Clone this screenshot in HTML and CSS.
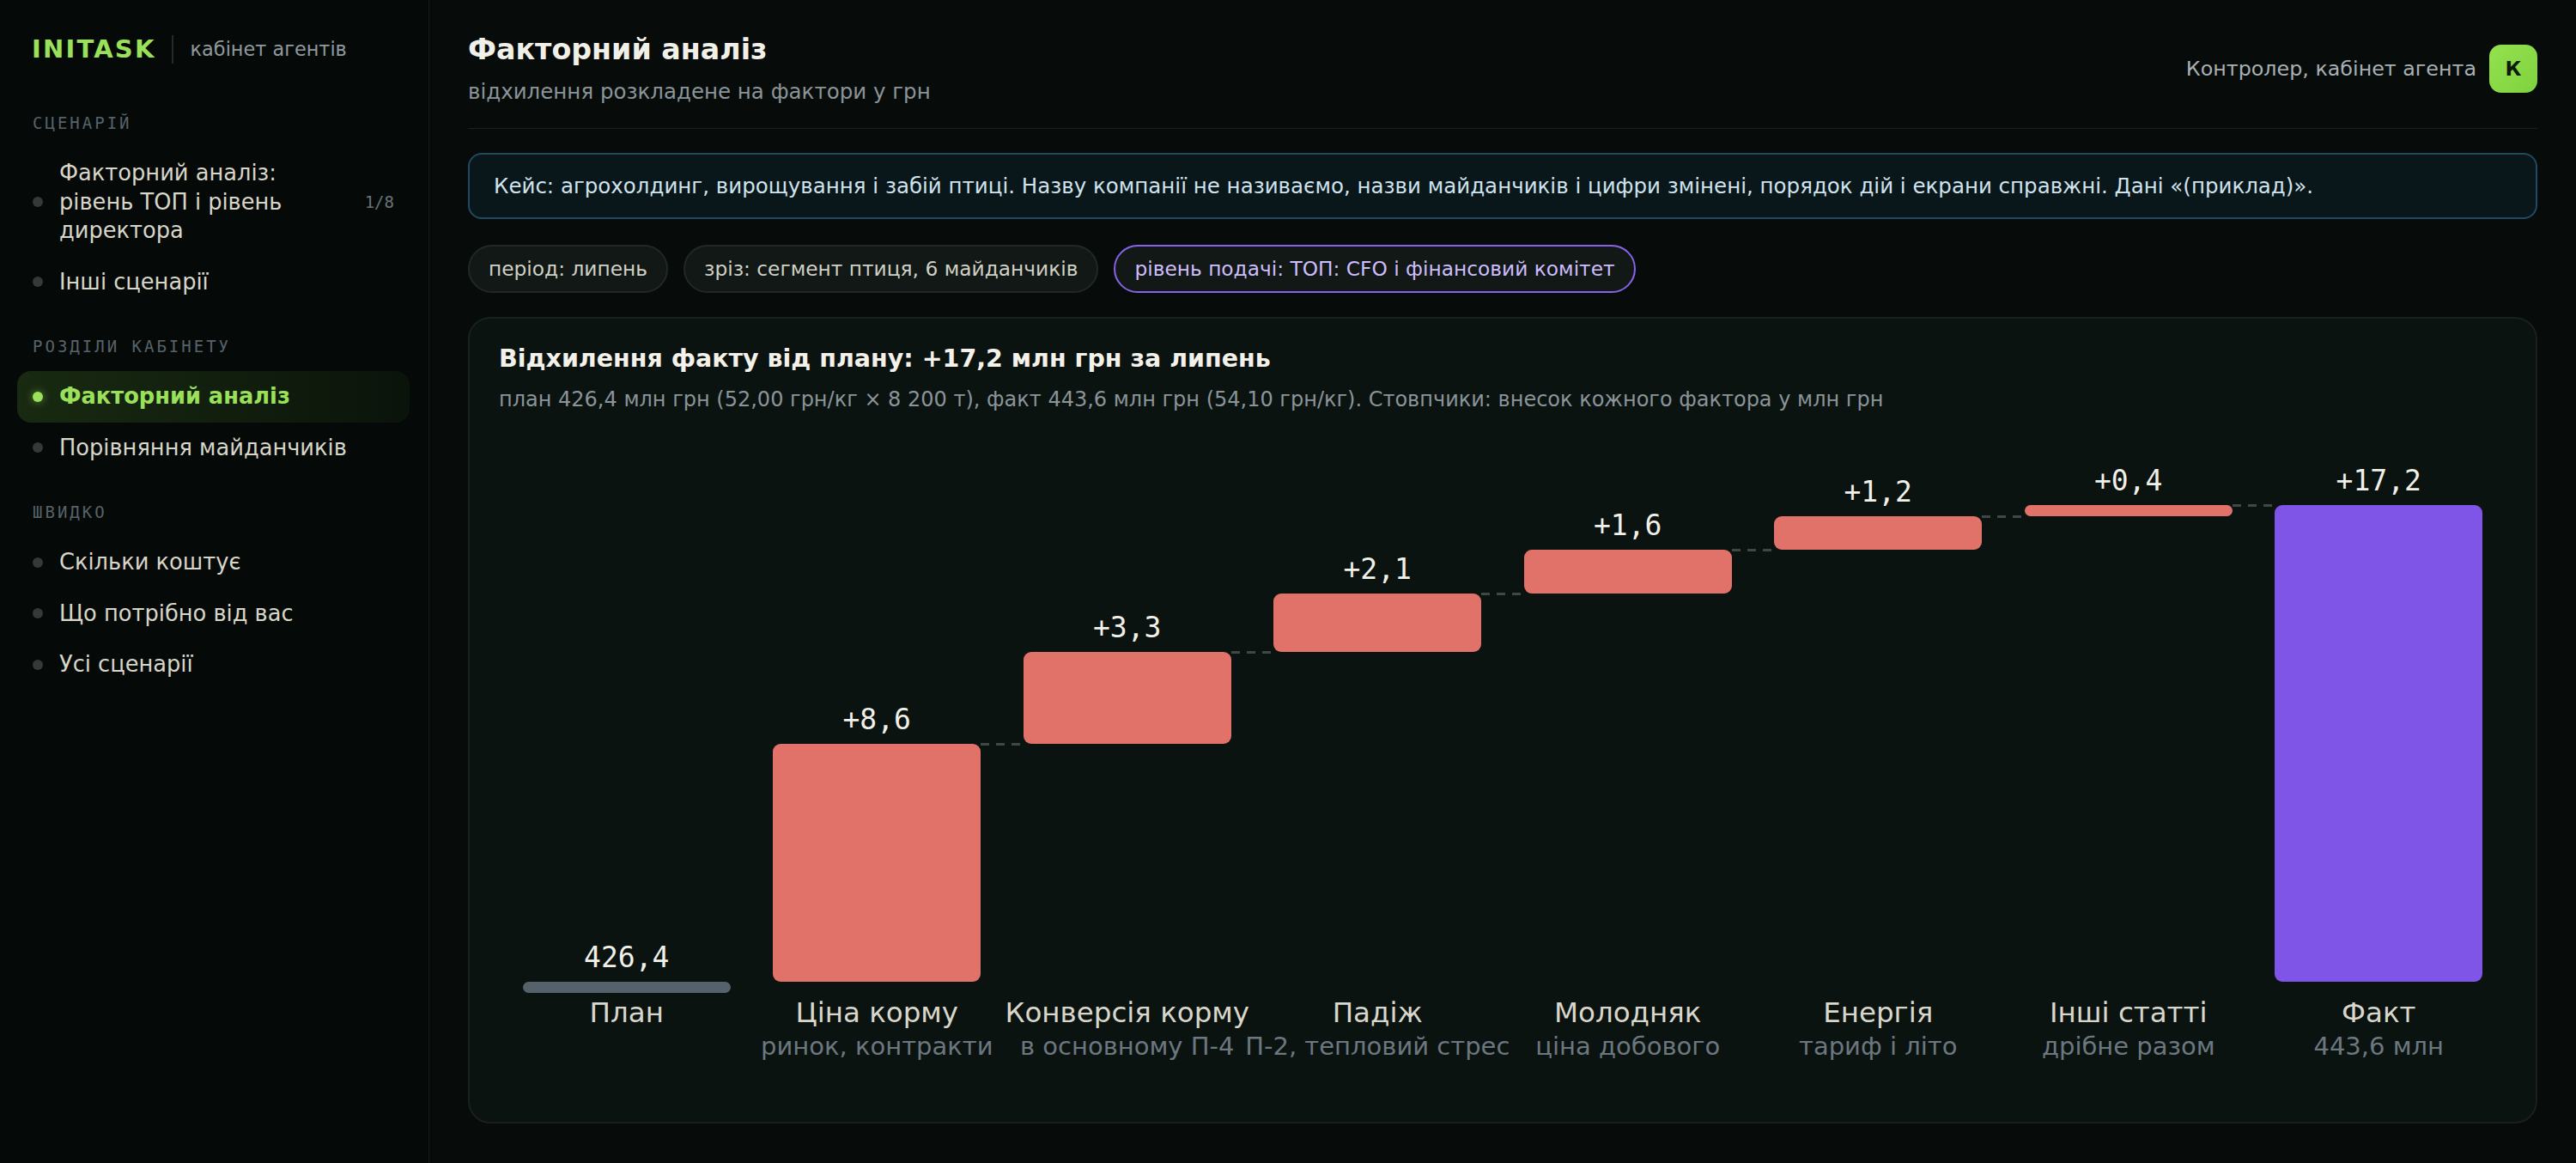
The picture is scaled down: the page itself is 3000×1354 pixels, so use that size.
FILE: index.html
```html
<!DOCTYPE html>
<html lang="uk">
<head>
    <meta charset="UTF-8">
    <meta name="viewport" content="width=device-width, initial-scale=1.0">
    <title>INITASK · Факторний аналіз</title>
    <link rel="stylesheet" href="styles.css">
</head>
<body>
    <aside class="side">
        <div class="brand">
            <span class="logo">INITASK</span>
            <span class="brand-sep"></span>
            <span class="brand-sub">кабінет агентів</span>
        </div>

        <section class="nav-group">
            <div class="nav-head">Сценарій</div>
            <a class="nav-item" href="#">
                <span class="dot"></span>
                <span class="nav-text">Факторний аналіз: рівень ТОП і рівень директора</span>
                <span class="nav-count">1/8</span>
            </a>
            <a class="nav-item" href="#">
                <span class="dot"></span>
                <span class="nav-text">Інші сценарії</span>
            </a>
        </section>

        <section class="nav-group">
            <div class="nav-head">Розділи кабінету</div>
            <a class="nav-item active" href="#">
                <span class="dot"></span>
                <span class="nav-text">Факторний аналіз</span>
            </a>
            <a class="nav-item" href="#">
                <span class="dot"></span>
                <span class="nav-text">Порівняння майданчиків</span>
            </a>
        </section>

        <section class="nav-group">
            <div class="nav-head">Швидко</div>
            <a class="nav-item" href="#">
                <span class="dot"></span>
                <span class="nav-text">Скільки коштує</span>
            </a>
            <a class="nav-item" href="#">
                <span class="dot"></span>
                <span class="nav-text">Що потрібно від вас</span>
            </a>
            <a class="nav-item" href="#">
                <span class="dot"></span>
                <span class="nav-text">Усі сценарії</span>
            </a>
        </section>
    </aside>

    <main class="main">
        <header class="top">
            <div>
                <h1 class="page-title">Факторний аналіз</h1>
                <div class="page-sub">відхилення розкладене на фактори у грн</div>
            </div>
            <div class="user">
                <span>Контролер, кабінет агента</span>
                <span class="avatar">К</span>
            </div>
        </header>

        <div class="case">Кейс: агрохолдинг, вирощування і забій птиці. Назву компанії не називаємо, назви майданчиків і цифри змінені, порядок дій і екрани справжні. Дані «(приклад)».</div>

        <div class="chips">
            <span class="chip">період: липень</span>
            <span class="chip">зріз: сегмент птиця, 6 майданчиків</span>
            <span class="chip level">рівень подачі: ТОП: CFO і фінансовий комітет</span>
        </div>

        <section class="card">
            <h2 class="card-title">Відхилення факту від плану: +17,2 млн грн за липень</h2>
            <div class="card-sub">план 426,4 млн грн (52,00 грн/кг × 8 200 т), факт 443,6 млн грн (54,10 грн/кг). Стовпчики: внесок кожного фактора у млн грн</div>
            <div class="chart" id="chart"></div>
        </section>
    </main>

    <script>
        // Factor contributions, mln UAH
        const factors = [
            { name: 'План', note: '', label: '426,4', kind: 'plan' },
            { name: 'Ціна корму', note: 'ринок, контракти', delta: 8.6 },
            { name: 'Конверсія корму', note: 'в основному П-4', delta: 3.3 },
            { name: 'Падіж', note: 'П-2, тепловий стрес', delta: 2.1 },
            { name: 'Молодняк', note: 'ціна добового', delta: 1.6 },
            { name: 'Енергія', note: 'тариф і літо', delta: 1.2 },
            { name: 'Інші статті', note: 'дрібне разом', delta: 0.4 },
            { name: 'Факт', note: '443,6 млн', delta: 17.2, kind: 'fact' }
        ];

        const PX_PER_MLN = 555 / 17.2;
        const PLAN_HEIGHT = 13;
        const chart = document.getElementById('chart');

        function formatDelta(value) {
            return '+' + value.toFixed(1).replace('.', ',');
        }

        // Build waterfall columns
        let running = 0;
        factors.forEach(f => {
            let height, lift, barClass, label;

            if (f.kind === 'plan') {
                height = PLAN_HEIGHT;
                lift = 0;
                barClass = 'plan';
                label = f.label;
            } else if (f.kind === 'fact') {
                height = f.delta * PX_PER_MLN;
                lift = PLAN_HEIGHT;
                barClass = 'fact';
                label = formatDelta(f.delta);
            } else {
                height = f.delta * PX_PER_MLN;
                lift = PLAN_HEIGHT + running * PX_PER_MLN;
                running += f.delta;
                barClass = 'up step';
                label = formatDelta(f.delta);
            }

            const col = document.createElement('div');
            col.className = 'col';
            col.innerHTML = `
                <div class="plot">
                    <div class="val">${label}</div>
                    <div class="bar ${barClass}" style="height:${height.toFixed(1)}px"></div>
                    <div style="height:${lift.toFixed(1)}px"></div>
                </div>
                <div class="name">${f.name}</div>
                <div class="note">${f.note}</div>
            `;
            chart.appendChild(col);
        });
    </script>
</body>
</html>
```

FILE: styles.css
```css
* {
    box-sizing: border-box;
}

body {
    margin: 0;
    display: flex;
    min-height: 100vh;
    background-color: #070c0a;
    color: #d8d6cb;
    font-family: "DejaVu Sans", Verdana, sans-serif;
}

/* sidebar */
.side {
    width: 500px;
    flex-shrink: 0;
    padding: 40px 22px 40px 20px;
    background-color: #050a08;
    border-right: 1px solid #161c19;
}

.brand {
    display: flex;
    align-items: center;
    height: 34px;
    padding-left: 17px;
    margin-bottom: 57px;
}

.logo {
    font-size: 29px;
    font-weight: bold;
    letter-spacing: 2.2px;
    color: #9be05b;
}

.brand-sep {
    width: 2px;
    height: 33px;
    background-color: #252b28;
    margin: 0 20px 0 18px;
}

.brand-sub {
    font-size: 22.4px;
    color: #8f999d;
}

.nav-group + .nav-group {
    margin-top: 33px;
}

.nav-head {
    padding-left: 18px;
    margin-bottom: 17px;
    font-family: "DejaVu Sans Mono", monospace;
    font-size: 19px;
    line-height: 24px;
    letter-spacing: 3px;
    text-transform: uppercase;
    color: #58626a;
}

.nav-item {
    display: flex;
    align-items: center;
    gap: 19px;
    padding: 13px 18px;
    border-radius: 16px;
    font-size: 25.7px;
    line-height: 33.5px;
    color: #d8d5c9;
    text-decoration: none;
}

.dot {
    flex-shrink: 0;
    width: 12px;
    height: 12px;
    border-radius: 50%;
    background-color: #343a37;
}

.nav-count {
    margin-left: auto;
    font-family: "DejaVu Sans Mono", monospace;
    font-size: 19px;
    color: #69727a;
}

.nav-item.active {
    background: linear-gradient(90deg, rgba(120, 200, 60, 0.17), rgba(120, 200, 60, 0.05));
    color: #9be05b;
    font-weight: bold;
}

.nav-item.active .dot {
    background-color: #9be05b;
    box-shadow: 0 0 10px rgba(155, 224, 91, 0.55);
}

/* main column */
.main {
    flex: 1;
    min-width: 0;
    padding: 0 45px 46px;
}

.top {
    display: flex;
    align-items: center;
    justify-content: space-between;
    padding: 38px 0 27px;
    border-bottom: 1px solid #1b2320;
}

.page-title {
    margin: 0;
    font-size: 33.3px;
    line-height: 40px;
    font-weight: bold;
    color: #f1f0e8;
}

.page-sub {
    margin-top: 14px;
    font-size: 24.5px;
    line-height: 30px;
    color: #8a9499;
}

.user {
    display: flex;
    align-items: center;
    gap: 15px;
    font-size: 23.8px;
    color: #a8b0b4;
}

.avatar {
    display: flex;
    align-items: center;
    justify-content: center;
    width: 56px;
    height: 56px;
    border-radius: 14px;
    background: linear-gradient(135deg, #93e24e, #7fd23e);
    color: #0d1a08;
    font-size: 23px;
    font-weight: bold;
}

.case {
    margin-top: 28px;
    padding: 21.5px 28px;
    border: 2px solid #1f4a61;
    border-radius: 16px;
    background-color: #0a171a;
    font-size: 24.5px;
    line-height: 30px;
    color: #cfe3ee;
}

.chips {
    display: flex;
    gap: 18px;
    margin-top: 30px;
}

.chip {
    padding: 12px 22px;
    border: 2px solid #212925;
    border-radius: 28px;
    background-color: #121815;
    font-size: 23.3px;
    line-height: 28px;
    color: #cfd0c6;
}

.chip.level {
    border-color: #8a62ea;
    color: #cdbdfc;
}

/* waterfall card */
.card {
    margin-top: 28px;
    padding: 30px 34px 70px;
    border: 2px solid #18211d;
    border-radius: 26px;
    background-color: #0b1310;
}

.card-title {
    margin: 0;
    font-size: 28.5px;
    line-height: 34px;
    font-weight: bold;
    color: #f3f1e9;
}

.card-sub {
    margin-top: 15px;
    font-size: 24px;
    line-height: 30px;
    color: #8a9499;
}

.chart {
    display: grid;
    grid-template-columns: repeat(8, 1fr);
    margin-top: 36px;
    padding: 0 3px;
}

.col {
    display: flex;
    flex-direction: column;
    align-items: center;
    min-width: 0;
}

.plot {
    display: flex;
    flex-direction: column;
    justify-content: flex-end;
    width: 83%;
    height: 640px;
}

.val {
    margin-bottom: 8px;
    font-family: "DejaVu Sans Mono", monospace;
    font-size: 33px;
    line-height: 40px;
    text-align: center;
    white-space: nowrap;
    color: #f1f0e8;
}

.bar {
    position: relative;
    border-radius: 9px;
}

.bar.plan {
    background-color: #55616b;
    border-radius: 7px;
}

.bar.up {
    background-color: #e0726a;
}

.bar.fact {
    background-color: #7e55e6;
}

/* dashed link from the top of a step to the next column */
.bar.step::after {
    content: "";
    position: absolute;
    left: 100%;
    top: -1px;
    width: 20.5%;
    height: 3px;
    background: repeating-linear-gradient(90deg, #3f4944 0 10px, transparent 10px 18px);
}

.name {
    margin-top: 4px;
    font-size: 32.5px;
    line-height: 38px;
    white-space: nowrap;
    color: #d9d7cc;
}

.note {
    margin-top: 2px;
    font-size: 29px;
    line-height: 36px;
    white-space: nowrap;
    color: #6c7780;
}
```
